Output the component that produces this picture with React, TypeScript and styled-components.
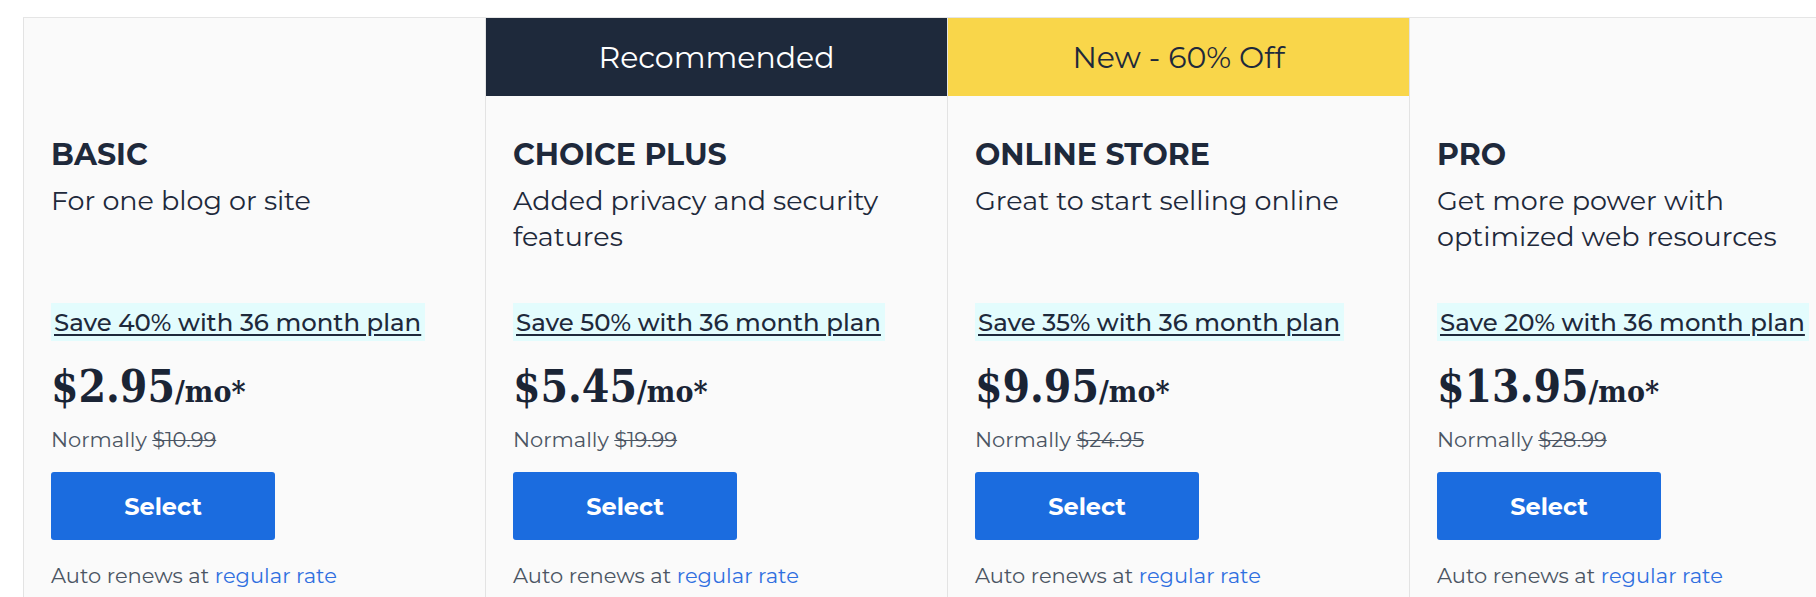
import React from "react";
import styled, { createGlobalStyle } from "styled-components";

type Tone = "none" | "dark" | "yellow";

type PlanType = {
  badge?: string;
  tone: Tone;
  name: string;
  desc: string;
  save: string;
  price: string;
  normal: string;
};

const plans: PlanType[] = [
  {
    tone: "none",
    name: "BASIC",
    desc: "For one blog or site",
    save: "Save 40% with 36 month plan",
    price: "$2.95",
    normal: "$10.99",
  },
  {
    badge: "Recommended",
    tone: "dark",
    name: "CHOICE PLUS",
    desc: "Added privacy and security features",
    save: "Save 50% with 36 month plan",
    price: "$5.45",
    normal: "$19.99",
  },
  {
    badge: "New - 60% Off",
    tone: "yellow",
    name: "ONLINE STORE",
    desc: "Great to start selling online",
    save: "Save 35% with 36 month plan",
    price: "$9.95",
    normal: "$24.95",
  },
  {
    tone: "none",
    name: "PRO",
    desc: "Get more power with optimized web resources",
    save: "Save 20% with 36 month plan",
    price: "$13.95",
    normal: "$28.99",
  },
];

const GlobalStyle = createGlobalStyle`
  html, body {
    margin: 0;
    padding: 0;
    background: #ffffff;
    overflow: hidden;
  }
  body {
    font-family: "Montserrat", "DejaVu Sans", "Noto Sans", sans-serif;
    color: #1e293b;
  }
`;

const Page = styled.div`
  padding: 17px 0 0 23px;
  width: 1900px;
`;

const PlanRow = styled.div`
  display: flex;
  border-top: 1px solid #e5e5e5;
`;

const PlanCard = styled.div`
  width: 462px;
  min-height: 700px;
  box-sizing: border-box;
  flex-shrink: 0;
  border-left: 1px solid #e3e3e3;
  background: #fafafa;
`;

const badgeColors: Record<Tone, { bg: string; fg: string }> = {
  none: { bg: "transparent", fg: "transparent" },
  dark: { bg: "#1e293b", fg: "#ffffff" },
  yellow: { bg: "#f9d64a", fg: "#1e293b" },
};

const Badge = styled.div<{ $tone: Tone }>`
  height: 78px;
  display: flex;
  align-items: center;
  justify-content: center;
  font-size: 30px;
  background: ${(p) => badgeColors[p.$tone].bg};
  color: ${(p) => badgeColors[p.$tone].fg};
`;

const Body = styled.div`
  padding: 41px 27px 0 27px;
`;

const PlanName = styled.h2`
  margin: 0 0 10px 0;
  font-size: 30px;
  line-height: 36px;
  font-weight: 700;
  color: #1e293b;
`;

const PlanDesc = styled.p`
  margin: 0 0 48px 0;
  font-size: 27px;
  line-height: 36px;
  min-height: 72px;
  max-width: 405px;
  color: #1e293b;
`;

const SaveTag = styled.a`
  display: inline-block;
  padding: 4px 4px 3px 3px;
  font-size: 24.4px;
  font-weight: 500;
  line-height: 31px;
  background: #e3fcfd;
  color: #1e293b;
  text-decoration: underline;
  text-underline-offset: 3px;
  cursor: pointer;
`;

const Price = styled.div`
  margin-top: 21px;
  font-family: "DejaVu Serif Condensed", "DejaVu Serif", "Liberation Serif", serif;
  font-stretch: condensed;
  font-weight: 700;
  font-size: 44px;
  line-height: 50px;
  color: #1a2435;
`;

const PriceUnit = styled.span`
  font-size: 30px;
`;

const Normally = styled.div`
  margin-top: 8px;
  font-size: 21px;
  line-height: 30px;
  color: #4b5563;
`;

const OldPrice = styled.s`
  text-decoration-thickness: 1px;
`;

const SelectButton = styled.button`
  display: block;
  margin-top: 17px;
  width: 224px;
  height: 68px;
  border: none;
  border-radius: 3px;
  background: #1b6cdf;
  color: #ffffff;
  font-family: inherit;
  font-size: 24px;
  font-weight: 700;
  cursor: pointer;
`;

const Renewal = styled.div`
  margin-top: 21px;
  font-size: 21px;
  line-height: 30px;
  color: #4b5563;
`;

const RenewLink = styled.a`
  color: #2f6fe0;
  text-decoration: none;
  cursor: pointer;
`;

const Plan = ({ plan }: { plan: PlanType }) => (
  <PlanCard>
    <Badge $tone={plan.tone}>{plan.badge}</Badge>
    <Body>
      <PlanName>{plan.name}</PlanName>
      <PlanDesc>{plan.desc}</PlanDesc>
      <SaveTag>{plan.save}</SaveTag>
      <Price>
        {plan.price}
        <PriceUnit>/mo*</PriceUnit>
      </Price>
      <Normally>
        Normally <OldPrice>{plan.normal}</OldPrice>
      </Normally>
      <SelectButton>Select</SelectButton>
      <Renewal>
        Auto renews at <RenewLink>regular rate</RenewLink>
      </Renewal>
    </Body>
  </PlanCard>
);

export default function App() {
  return (
    <>
      <GlobalStyle />
      <Page>
        <PlanRow>
          {plans.map((p) => (
            <Plan key={p.name} plan={p} />
          ))}
        </PlanRow>
      </Page>
    </>
  );
}
